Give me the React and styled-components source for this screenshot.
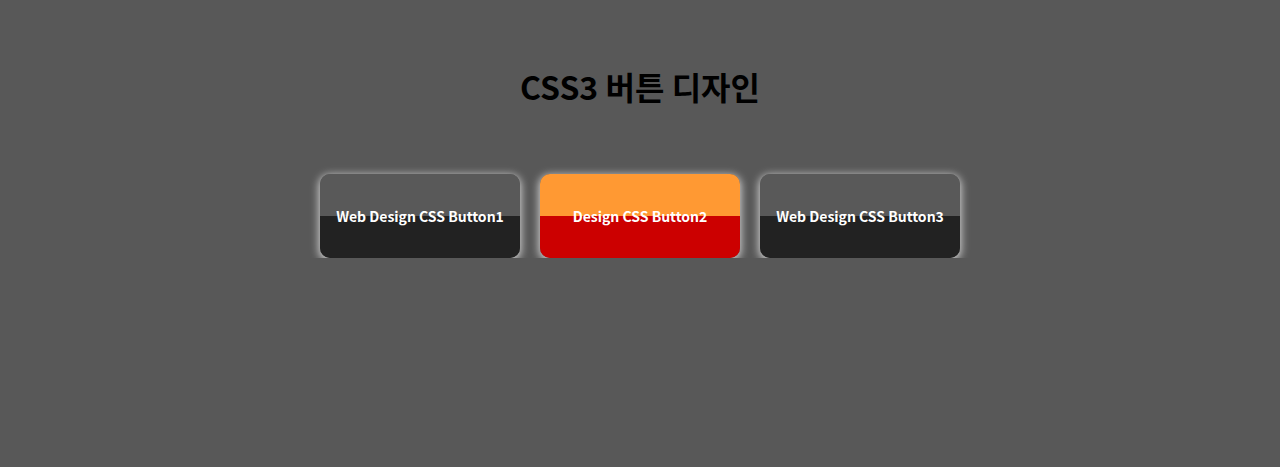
import React from "react";
import styled, { createGlobalStyle } from "styled-components";

const GlobalStyle = createGlobalStyle`
  html, body {
    margin: 0;
    padding: 0;
    background: #585858;
    font-family: "Noto Sans CJK KR", "Noto Sans", sans-serif;
  }
`;

const Page = styled.div`
  display: flex;
  flex-direction: column;
  align-items: center;
  padding-top: 63px;
`;

const Title = styled.h1`
  margin: 0;
  font-size: 32px;
  line-height: 46px;
  font-weight: 700;
  color: #000;
`;

const Row = styled.div`
  display: flex;
  gap: 20px;
  margin-top: 65px;
`;

const Button = styled.a`
  display: flex;
  align-items: center;
  justify-content: center;
  width: 200px;
  height: 84px;
  border-radius: 10px;
  background: linear-gradient(
    to bottom,
    ${(p) => p.$top} 0%,
    ${(p) => p.$top} 50%,
    ${(p) => p.$bottom} 50%,
    ${(p) => p.$bottom} 100%
  );
  box-shadow: 0 2px 9px 1px rgba(255, 255, 255, 0.75);
  color: #fff;
  font-size: 14px;
  font-weight: 700;
  text-decoration: none;
  cursor: pointer;
`;

const buttons = [
  { label: "Web Design CSS Button1", top: "#595959", bottom: "#222222" },
  { label: "Design CSS Button2", top: "#ff9933", bottom: "#cc0000" },
  { label: "Web Design CSS Button3", top: "#595959", bottom: "#222222" },
];

export default function App() {
  return (
    <>
      <GlobalStyle />
      <Page>
        <Title>CSS3 버튼 디자인</Title>
        <Row>
          {buttons.map((b) => (
            <Button key={b.label} $top={b.top} $bottom={b.bottom}>
              {b.label}
            </Button>
          ))}
        </Row>
      </Page>
    </>
  );
}
